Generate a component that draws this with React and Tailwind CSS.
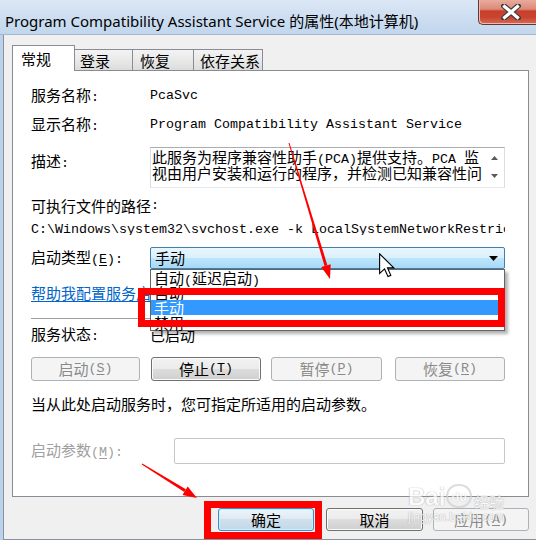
import React from "react";

const CJK = "font-['Noto_Sans_CJK_SC',sans-serif] text-[15px]";
const MONO = "font-['Liberation_Mono','Noto_Sans_CJK_SC',monospace] text-[13.33px]";

function M({ t }) {
  const parts = t.split(/([\x00-\x7f]+)/).filter(Boolean);
  return parts.map((p, i) =>
    /^[\x00-\x7f]+$/.test(p) ? (
      <span key={i} className={MONO}>{p}</span>
    ) : (
      <span key={i} className={CJK}>{p}</span>
    )
  );
}

function T({ t }) {
  const segs = t.split(/(_[A-Z])/).filter(Boolean);
  return segs.map((s, i) =>
    s.length === 2 && s[0] === "_" ? (
      <span key={i} className={MONO + " underline underline-offset-2"}>{s[1]}</span>
    ) : (
      <M key={i} t={s} />
    )
  );
}

const BTN = "h-full flex items-center justify-center rounded-[3px] border leading-[16px] whitespace-nowrap";
const NORMAL = "border-[#707070] bg-[linear-gradient(#f2f2f2,#ebebeb_50%,#dddddd_50%,#cfcfcf)] text-black shadow-[inset_0_0_0_1px_#fbfbfb]";
const DEF = "border-[#3c8fc8] bg-[linear-gradient(#edf5fa,#dde9f2_50%,#cfe0ec_50%,#c2d8e7)] text-black shadow-[inset_0_0_0_1px_#cdeefd]";
const DIS = "border-[#adb2b5] bg-[#f4f4f4] text-[#8a8a8a]";

export default function App() {
  return (
    <div className="relative w-[536px] h-[540px] overflow-hidden bg-[#bcd2ea] flex flex-col select-none text-black">
      {/* Title bar */}
      <div className="h-[35px] shrink-0 flex items-start bg-[linear-gradient(#dbe7f5,#c1d6ed)] border-b border-[#a3b7ce]">
        <div className="pl-[5px] pt-[12px] leading-[18px] text-[15px] font-['Noto_Sans','Noto_Sans_CJK_SC',sans-serif] whitespace-nowrap">
          Program Compatibility Assistant Service 的属性(本地计算机)
        </div>
        <div className="ml-auto w-[58px] h-[25px] rounded-bl-[5px] border-l border-b border-[#5e3a36] bg-[linear-gradient(#e9aa9c,#dc8a79_38%,#c63f2b_46%,#c9442f_72%,#d66b58)] shadow-[inset_1px_-1px_0_#f0b9ad] flex items-center justify-center">
          <svg width="20" height="16" viewBox="0 0 20 16" className="ml-[6px]">
            <path d="M3 2 L17 14 M17 2 L3 14" stroke="#3b3b3b" strokeWidth="5.5" strokeLinecap="square" />
            <path d="M3.5 2.5 L16.5 13.5 M16.5 2.5 L3.5 13.5" stroke="#ffffff" strokeWidth="3.2" strokeLinecap="square" />
          </svg>
        </div>
      </div>

      {/* Client area */}
      <div className="flex-1 ml-[3px] bg-[#f0f0f0] border-l border-b border-[#8592a4] pl-[8px] pt-[10px] flex flex-col">
        {/* Tabs */}
        <div className="h-[25px] flex items-end">
          <div className="relative z-10 w-[63px] h-[26px] -mb-px bg-white border border-b-0 border-[#898c95] pl-[8px] pt-[5px] leading-[16px]">
            <M t="常规" />
          </div>
          <div className="w-[58px] h-[21px] border-t border-r border-[#898c95] bg-[linear-gradient(#f3f3f3,#e9e9e9_50%,#dcdcdc)] pl-[5px] pt-[3px] leading-[16px]">
            <M t="登录" />
          </div>
          <div className="w-[61px] h-[21px] border-t border-r border-[#898c95] bg-[linear-gradient(#f3f3f3,#e9e9e9_50%,#dcdcdc)] pl-[7px] pt-[3px] leading-[16px]">
            <M t="恢复" />
          </div>
          <div className="w-[69px] h-[21px] border-t border-r border-[#898c95] bg-[linear-gradient(#f3f3f3,#e9e9e9_50%,#dcdcdc)] pl-[6px] pt-[3px] leading-[16px]">
            <M t="依存关系" />
          </div>
        </div>

        {/* Panel */}
        <div className="w-[517px] h-[427px] bg-white border border-[#898c95] pl-[18px] flex flex-col leading-[16px]">
          <div className="mt-[17px] h-[16px] flex items-center">
            <div className="w-[119px] shrink-0"><M t="服务名称:" /></div>
            <span className={MONO}>PcaSvc</span>
          </div>
          <div className="mt-[13px] h-[16px] flex items-center">
            <div className="w-[119px] shrink-0"><M t="显示名称:" /></div>
            <span className={MONO + " whitespace-nowrap"}>Program Compatibility Assistant Service</span>
          </div>
          <div className="mt-[14px] h-[41px] flex">
            <div className="w-[119px] shrink-0 pt-[6px]"><M t="描述:" /></div>
            <div className="w-[355px] h-[41px] flex border border-[#abadb3] border-l-[#dbdde3] border-r-[#dbdde3] border-b-[#e3e9ef] bg-white">
              <div className="w-[334px] pl-px pt-px">
                <div className="whitespace-nowrap h-[16px]"><M t="此服务为程序兼容性助手(PCA)提供支持。PCA 监" /></div>
                <div className="whitespace-nowrap h-[16px]"><M t="视由用户安装和运行的程序，并检测已知兼容性问" /></div>
              </div>
              <div className="flex-1 flex flex-col items-center pt-[8px]">
                <svg width="7" height="4" viewBox="0 0 7 4"><path d="M0 4 L3.5 0 L7 4 Z" fill="#5a5a5a" /></svg>
                <svg width="7" height="4" viewBox="0 0 7 4" className="mt-[14px]"><path d="M0 0 L3.5 4 L7 0 Z" fill="#5a5a5a" /></svg>
              </div>
            </div>
          </div>
          <div className="mt-[10px] h-[16px] flex items-center"><M t="可执行文件的路径:" /></div>
          <div className="mt-[5px] h-[16px] w-[474px] overflow-hidden whitespace-nowrap">
            <span className={MONO}>{"C:\\Windows\\system32\\svchost.exe -k LocalSystemNetworkRestricted"}</span>
          </div>
          <div className="mt-[12px] h-[22px] flex items-center">
            <div className="w-[119px] shrink-0"><T t="启动类型(_E):" /></div>
            <div className="w-[355px] h-[22px] flex items-center border border-[#3c7fb1] rounded-[2px] bg-[linear-gradient(#eaf6fd,#d9f0fc_50%,#bee6fd_50%,#a7d9f5)] pl-[4px] pr-[6px]">
              <M t="手动" />
              <svg width="9" height="5" viewBox="0 0 9 5" className="ml-auto"><path d="M0 0 L9 0 L4.5 5 Z" fill="#000" /></svg>
            </div>
          </div>
          <div className="mt-[16px] h-[16px] flex items-center whitespace-nowrap text-[#0066cc] underline underline-offset-2">
            <M t="帮助我配置服务启动选项。" />
          </div>
          <div className="mt-[17px] h-px w-[474px] bg-[#a0a0a0]" />
          <div className="mt-[8px] h-[16px] flex items-center">
            <div className="w-[119px] shrink-0"><M t="服务状态:" /></div>
            <M t="已启动" />
          </div>
          <div className="mt-[14px] h-[24px] flex">
            <div className={BTN + " " + DIS + " w-[109px]"}><T t="启动(_S)" /></div>
            <div className={BTN + " " + NORMAL + " w-[110px] ml-[11px]"}><T t="停止(_T)" /></div>
            <div className={BTN + " " + DIS + " w-[111px] ml-[10px]"}><T t="暂停(_P)" /></div>
            <div className={BTN + " " + DIS + " w-[110px] ml-[13px]"}><T t="恢复(_R)" /></div>
          </div>
          <div className="mt-[15px] h-[16px] flex items-center whitespace-nowrap">
            <M t="当从此处启动服务时，您可指定所适用的启动参数。" />
          </div>
          <div className="mt-[26px] h-[26px] flex items-center">
            <div className="w-[143px] shrink-0 text-[#a0a0a0]"><T t="启动参数(_M):" /></div>
            <div className="w-[331px] h-[26px] border border-[#c5c7cc] rounded-[2px] bg-white" />
          </div>
        </div>

        {/* Bottom buttons */}
        <div className="mt-[11px] h-[23px] flex justify-end pr-[7px]">
          <div className={BTN + " " + DEF + " w-[96px]"}><M t="确定" /></div>
          <div className={BTN + " " + NORMAL + " w-[97px] ml-[12px]"}><M t="取消" /></div>
          <div className={BTN + " " + DIS + " w-[96px] ml-[10px]"}><T t="应用(_A)" /></div>
        </div>
      </div>

      {/* Dropdown list (open combobox popup) */}
      <div className="absolute left-[150px] top-[269px] w-[355px] h-[62px] bg-white border border-[#646464] shadow-[3px_3px_3px_rgba(0,0,0,0.3)] leading-[15px] flex flex-col">
        <div className="h-[15px] pl-[3px] whitespace-nowrap"><M t="自动(延迟启动)" /></div>
        <div className="h-[15px] pl-[3px]"><M t="自动" /></div>
        <div className="h-[15px] pl-[3px] bg-[#3399ff] text-white"><M t="手动" /></div>
        <div className="h-[15px] pl-[3px]"><M t="禁用" /></div>
      </div>

      {/* Red annotation boxes */}
      <div className="absolute left-[138px] top-[288px] w-[367px] h-[39px] border-[7px] border-[#ff0000]" />
      <div className="absolute left-[204px] top-[501px] w-[118px] h-[38px] border-[7px] border-[#ff0000]" />

      {/* Watermark */}
      <div className="absolute left-[408px] top-[484px] opacity-70 pointer-events-none">
        <div className="flex items-end leading-none">
          <span className="font-['Liberation_Sans',sans-serif] font-bold text-[24px] text-white [text-shadow:0_0_1px_#9a9a9a,0_0_1px_#9a9a9a]">Bai</span>
          <span className="ml-[1px] mb-[1px] w-[26px] h-[24px] rounded-full border-2 border-[#d0d0d0] flex items-center justify-center font-['Liberation_Sans',sans-serif] font-bold text-[13px] text-white [text-shadow:0_0_1px_#9a9a9a]">du</span>
          <span className="ml-[2px] font-['Noto_Sans_CJK_SC',sans-serif] text-[15px] text-white [text-shadow:0_0_1px_#9a9a9a,0_0_1px_#9a9a9a]">经验</span>
        </div>
        <div className="mt-[2px] font-['Liberation_Sans',sans-serif] text-[12px] leading-none text-white [text-shadow:0_0_1px_#9a9a9a,0_0_1px_#9a9a9a]">jingyan.baidu.com</div>
      </div>

      {/* Red arrows */}
      <svg className="absolute left-0 top-0 pointer-events-none" width="536" height="540" viewBox="0 0 536 540">
        <polygon points="288.5,143.1 289.5,142.9 327.4,265.2 324.5,266.0" fill="#ff0000" />
        <polygon points="321.2,267.0 330.7,264.2 330,279" fill="#ff0000" />
        <polygon points="142.3,463.6 141.7,464.4 184.3,491.9 185.9,489.3" fill="#ff0000" />
        <polygon points="182.5,494.9 187.7,486.4 197,498" fill="#ff0000" />
      </svg>

      {/* Mouse cursor */}
      <svg className="absolute left-[379px] top-[253px] pointer-events-none" width="16" height="25" viewBox="0 0 13 20">
        <path d="M0.5 0.5 L0.5 16.5 L4.5 12.8 L7.3 19 L9.6 18 L6.9 11.9 L12 11.9 Z" fill="#ffffff" stroke="#000" strokeWidth="0.9" strokeLinejoin="miter" />
      </svg>
    </div>
  );
}
